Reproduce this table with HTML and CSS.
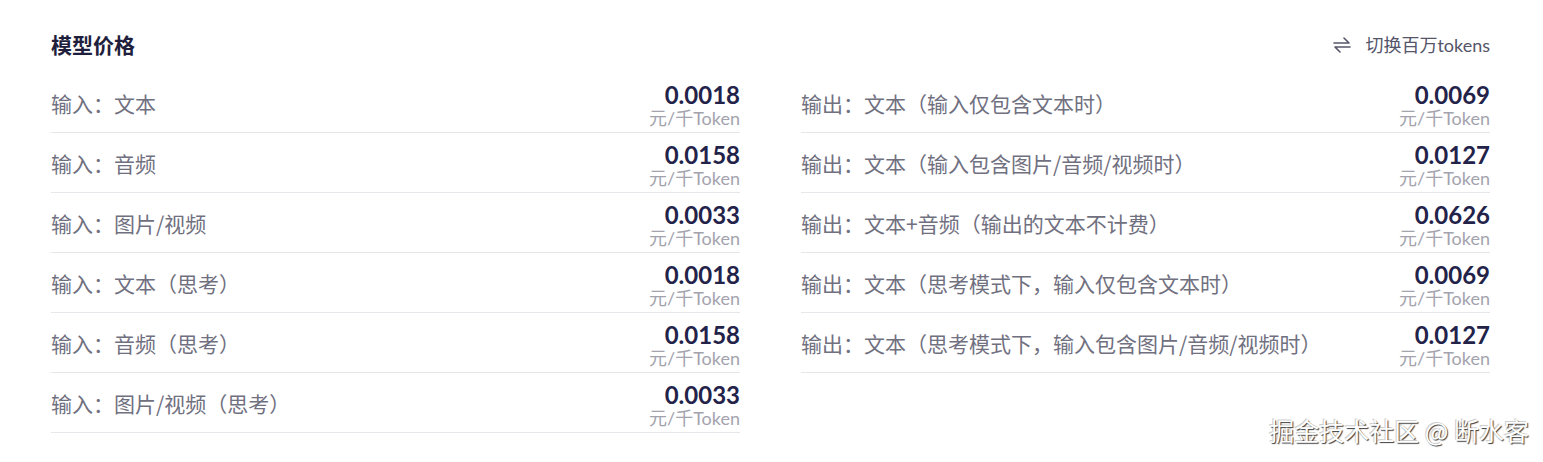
FILE: index.html
```html
<!DOCTYPE html>
<html lang="zh">
<head>
<meta charset="utf-8">
<link rel="stylesheet" href="styles.css">
</head>
<body>
<div class="page">
  <div class="header">
    <h2 class="title">模型价格</h2>
    <div class="toggle">
      <svg class="swap" width="18" height="16" viewBox="0 0 18 16" fill="none" stroke="#55556a" stroke-width="1.6" stroke-linecap="round" stroke-linejoin="round">
        <path d="M1 6H16L11 1"/>
        <path d="M17 10H2L7 15"/>
      </svg>
      <span>切换百万tokens</span>
    </div>
  </div>
  <div class="grid">
    <div class="col">
      <div class="row"><span class="label">输入：文本</span><div class="price"><div class="num">0.0018</div><div class="unit">元/千Token</div></div></div>
      <div class="row"><span class="label">输入：音频</span><div class="price"><div class="num">0.0158</div><div class="unit">元/千Token</div></div></div>
      <div class="row"><span class="label">输入：图片/视频</span><div class="price"><div class="num">0.0033</div><div class="unit">元/千Token</div></div></div>
      <div class="row"><span class="label">输入：文本（思考）</span><div class="price"><div class="num">0.0018</div><div class="unit">元/千Token</div></div></div>
      <div class="row"><span class="label">输入：音频（思考）</span><div class="price"><div class="num">0.0158</div><div class="unit">元/千Token</div></div></div>
      <div class="row"><span class="label">输入：图片/视频（思考）</span><div class="price"><div class="num">0.0033</div><div class="unit">元/千Token</div></div></div>
    </div>
    <div class="col">
      <div class="row"><span class="label">输出：文本（输入仅包含文本时）</span><div class="price"><div class="num">0.0069</div><div class="unit">元/千Token</div></div></div>
      <div class="row"><span class="label">输出：文本（输入包含图片/音频/视频时）</span><div class="price"><div class="num">0.0127</div><div class="unit">元/千Token</div></div></div>
      <div class="row"><span class="label">输出：文本+音频（输出的文本不计费）</span><div class="price"><div class="num">0.0626</div><div class="unit">元/千Token</div></div></div>
      <div class="row"><span class="label">输出：文本（思考模式下，输入仅包含文本时）</span><div class="price"><div class="num">0.0069</div><div class="unit">元/千Token</div></div></div>
      <div class="row"><span class="label">输出：文本（思考模式下，输入包含图片/音频/视频时）</span><div class="price"><div class="num">0.0127</div><div class="unit">元/千Token</div></div></div>
    </div>
  </div>
  <div class="watermark">掘金技术社区 @ 断水客</div>
</div>
</body>
</html>
```

FILE: styles.css
```css
* { box-sizing: border-box; }
html, body { margin: 0; padding: 0; background: #ffffff; }
body {
  font-family: Lato, "Noto Sans CJK SC", sans-serif;
  color: #1f1f3d;
}
.page {
  position: relative;
  width: 1543px;
  height: 462px;
  padding: 28px 53px 0 51px;
}
.header {
  display: flex;
  justify-content: space-between;
  align-items: center;
  height: 32px;
  margin-bottom: 13px;
}
.title {
  margin: 0;
  font-size: 21px;
  font-weight: 700;
  color: #1f1f3d;
  font-family: "Noto Sans CJK SC", sans-serif;
}
.toggle {
  display: flex;
  align-items: center;
  gap: 14px;
  font-size: 18px;
  color: #55556a;
  font-family: Lato, "Noto Sans CJK SC", sans-serif;
}
.swap { margin-top: 1px; }
.grid {
  display: grid;
  grid-template-columns: 1fr 1fr;
  column-gap: 61px;
}
.row {
  display: flex;
  justify-content: space-between;
  align-items: center;
  height: 60px;
  border-bottom: 1px solid #e6e6eb;
}
.label {
  font-family: "Noto Sans CJK SC", sans-serif;
  font-size: 21px;
  color: #707080;
}
.price {
  text-align: right;
  padding-top: 3px;
}
.num {
  font-family: Lato, sans-serif;
  font-weight: 700;
  font-size: 24px;
  line-height: 27px;
  color: #23234a;
}
.unit {
  font-family: Lato, "Noto Sans CJK SC", sans-serif;
  font-size: 18px;
  line-height: 20px;
  color: #a3a3ae;
}
.watermark {
  position: absolute;
  right: 14px;
  bottom: 14px;
  font-family: "Noto Sans CJK SC", sans-serif;
  font-size: 25px;
  color: #ffffff;
  text-shadow: 1px 1px 1px #3c3c3c, -1px -1px 0 #cfcfcf;
}
```
